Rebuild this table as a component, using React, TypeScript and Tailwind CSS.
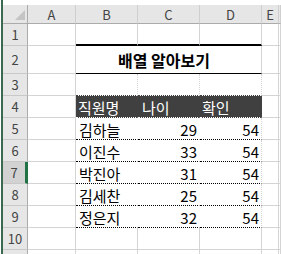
import React from 'react';

const font = { fontFamily: '"Noto Sans CJK KR", "Noto Sans", sans-serif' };

const cols = ['A', 'B', 'C', 'D', 'E', ''];

const rows = [
  { name: '김하늘', age: 29, check: 54 },
  { name: '이진수', age: 33, check: 54 },
  { name: '박진아', age: 31, check: 54 },
  { name: '김세찬', age: 25, check: 54 },
  { name: '정은지', age: 32, check: 54 },
];

const grid = 'border-r border-b border-[#d4d4d4]';

const RowHead = ({ n, active = false }: { n?: number; active?: boolean }) => (
  <div
    className={
      'flex items-center justify-center border-b border-[#c8c8c8] text-[13px] text-[#444] ' +
      (active
        ? 'bg-[#d2d2d2] border-r-[3px] border-r-[#217346]'
        : 'bg-[#e6e6e6] border-r border-r-[#ababab]')
    }
  >
    {n !== undefined && <span className="leading-none">{n}</span>}
  </div>
);

const Empty = ({ extra = '' }: { extra?: string }) => <div className={grid + ' ' + extra} />;

const App: React.FC = () => {
  return (
    <div className="flex w-[281px] h-[254px] overflow-hidden bg-white text-black" style={font}>
      {/* 왼쪽 창 테두리 */}
      <div className="w-[3px] shrink-0 h-full">
        <div className="ml-[1px] w-[2px] h-full bg-[#3d6a4e]" />
      </div>

      <div className="flex-1 pt-[5px]">
        <div className="grid grid-cols-[25px_48px_62px_62px_62px_17px_1fr] grid-rows-[19px_22px_28px_22px_22px_22px_22px_22px_22px_22px_22px_22px]">
          {/* 열 머리글 */}
          <div className="relative bg-[#e6e6e6] border-r border-b border-[#ababab]">
            <svg className="absolute left-[12px] top-[5px]" width="10" height="10" viewBox="0 0 10 10">
              <polygon points="10,0 10,10 0,10" fill="#c4c4c4" />
            </svg>
          </div>
          {cols.map((c, i) => (
            <div
              key={i}
              className="flex items-center justify-center bg-[#e6e6e6] border-r border-r-[#cfcfcf] border-b border-b-[#ababab] text-[13px] text-[#444]"
            >
              <span className="leading-none">{c}</span>
            </div>
          ))}

          {/* 1행 */}
          <RowHead n={1} />
          <Empty />
          <div className="border-r border-r-[#d4d4d4] border-b-2 border-b-black" />
          <div className="border-r border-r-[#d4d4d4] border-b-2 border-b-black" />
          <div className="border-r border-r-[#d4d4d4] border-b-2 border-b-black" />
          <Empty />
          <Empty />

          {/* 2행 - 제목 */}
          <RowHead n={2} />
          <Empty />
          <div className="col-span-3 flex items-center justify-center pr-[9px] border-r border-r-[#d4d4d4] border-b border-b-black">
            <span className="text-[16px] font-bold leading-none">배열 알아보기</span>
          </div>
          <Empty />
          <Empty />

          {/* 3행 */}
          <RowHead n={3} />
          <Empty />
          <div className="border-r border-r-[#d4d4d4] border-b border-dotted border-b-[#404040]" />
          <div className="border-r border-r-[#d4d4d4] border-b border-dotted border-b-[#404040]" />
          <div className="border-r border-r-[#d4d4d4] border-b border-dotted border-b-[#404040]" />
          <Empty />
          <Empty />

          {/* 4행 - 헤더 */}
          <RowHead n={4} />
          <Empty />
          <div className="flex items-end pl-[2px] pb-[2px] bg-[#404040] border-r border-r-[#404040] border-b border-dotted border-b-white text-white text-[15px]">
            <span className="leading-none">직원명</span>
          </div>
          <div className="flex items-end pl-[4px] pb-[2px] bg-[#404040] border-r border-r-[#404040] border-b border-dotted border-b-white text-white text-[15px]">
            <span className="leading-none">나이</span>
          </div>
          <div className="flex items-end pl-[2px] pb-[2px] bg-[#404040] border-r border-r-[#404040] border-b border-dotted border-b-white text-white text-[15px]">
            <span className="leading-none">확인</span>
          </div>
          <Empty />
          <Empty />

          {/* 5~9행 - 데이터 */}
          {rows.map((r, i) => (
            <React.Fragment key={i}>
              <RowHead n={5 + i} active={i === 2} />
              <Empty />
              <div className="flex items-end pl-[3px] pb-[2px] border-r border-r-white border-b border-dotted border-b-black text-[15px]">
                <span className="leading-none">{r.name}</span>
              </div>
              <div className="flex items-end justify-end pr-[2px] pb-[2px] border-r border-r-white border-b border-dotted border-b-black text-[15px]">
                <span className="leading-none">{r.age}</span>
              </div>
              <div className="flex items-end justify-end pr-[2px] pb-[2px] border-r border-r-[#d4d4d4] border-b border-dotted border-b-black text-[15px]">
                <span className="leading-none">{r.check}</span>
              </div>
              <Empty />
              <Empty />
            </React.Fragment>
          ))}

          {/* 10~11행 */}
          {[10, 11].map((n) => (
            <React.Fragment key={n}>
              <RowHead n={n === 10 ? n : undefined} />
              <Empty />
              <Empty />
              <Empty />
              <Empty />
              <Empty />
              <Empty />
            </React.Fragment>
          ))}
        </div>
      </div>
    </div>
  );
};

export default App;
